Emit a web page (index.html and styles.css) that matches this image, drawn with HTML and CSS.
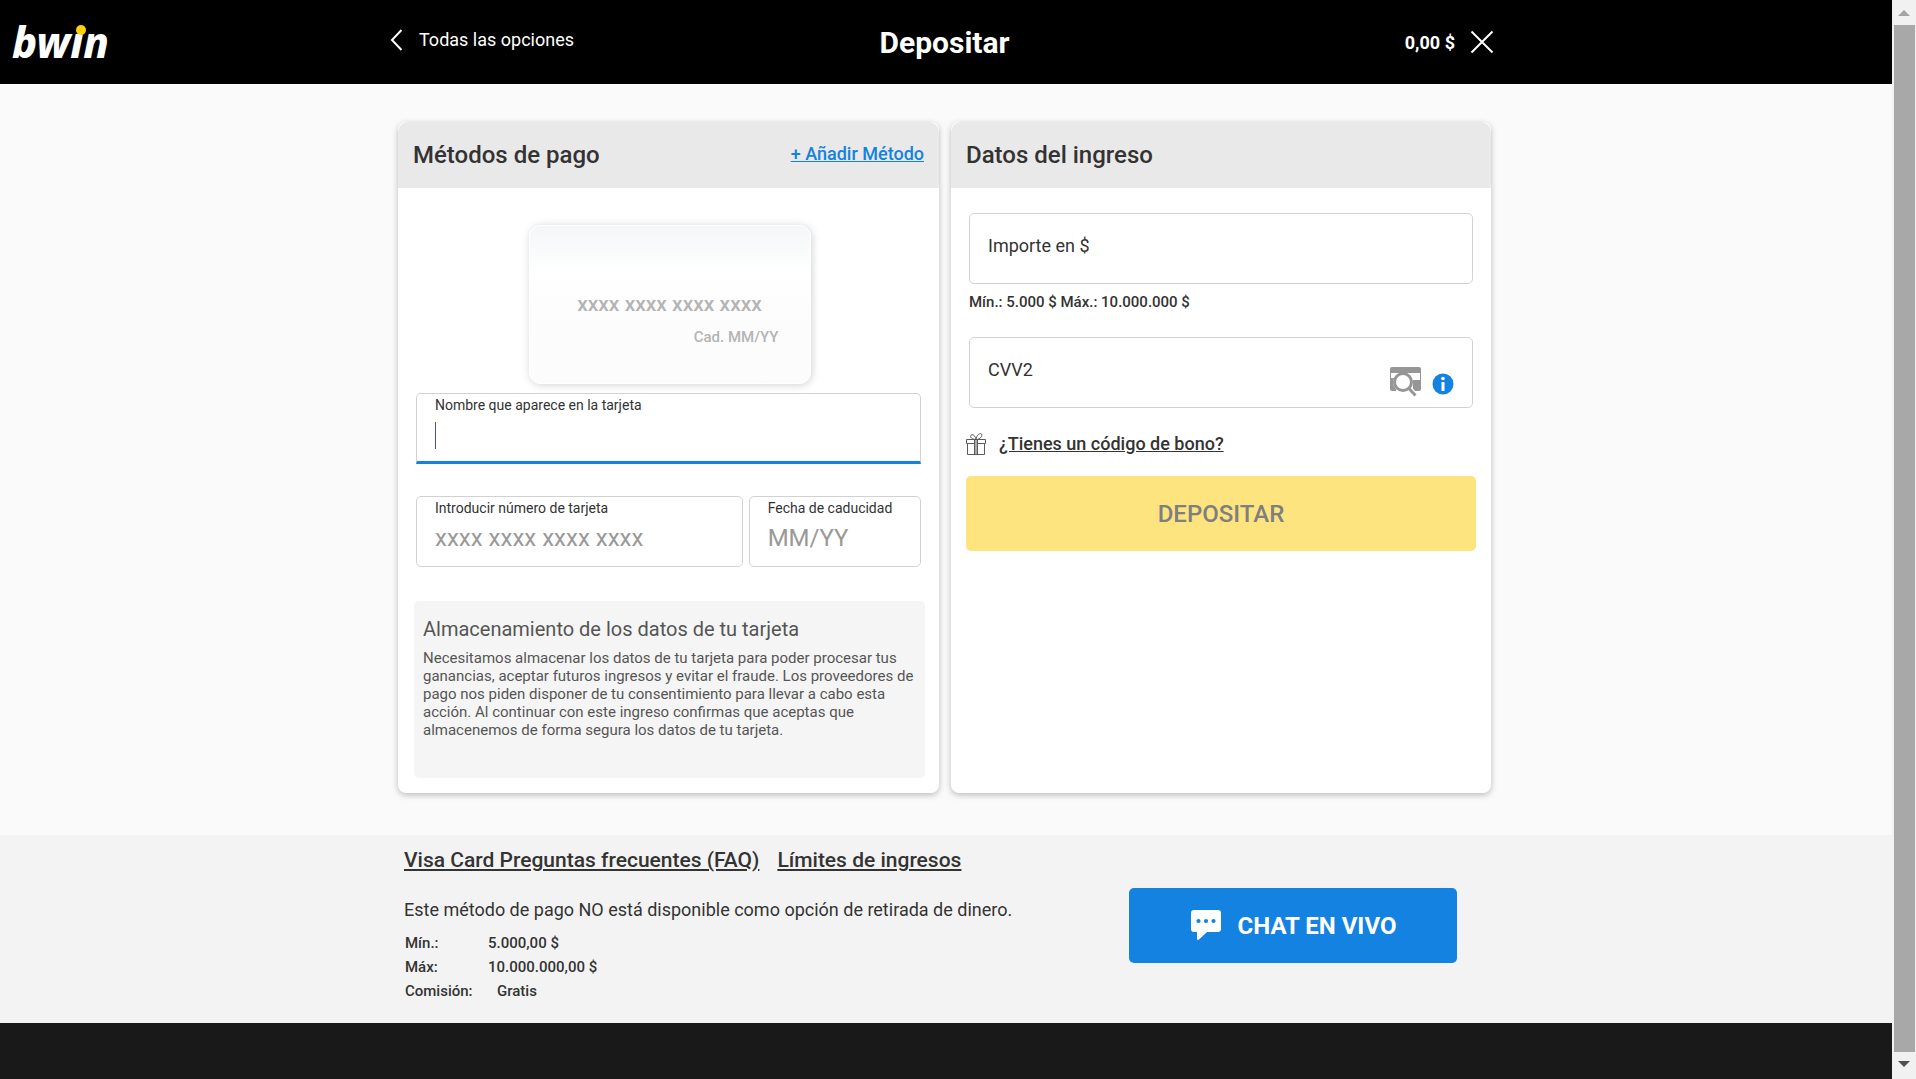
FILE: index.html
```html
<!DOCTYPE html>
<html lang="es">
<head>
<meta charset="utf-8">
<title>Depositar - bwin</title>
<link rel="stylesheet" href="styles.css">
</head>
<body>
<div class="page">
  <header class="topbar">
    <a class="logo" href="#" aria-label="bwin">
      <svg width="98" height="40" viewBox="0 0 98 40">
        <text class="logo-text" x="0" y="36">bwin</text>
        <path d="M60 0h18v12H60z"/>
        <circle class="logo-dot" cx="69" cy="8" r="5"/>
      </svg>
    </a>
    <div class="container topbar-inner">
      <a class="back" href="#">
        <svg width="13" height="22" viewBox="0 0 13 22"><path d="M11.500 1 2 11l9.500 10" fill="none" stroke="#fff" stroke-width="2"/></svg>
        <span>Todas las opciones</span>
      </a>
      <h1 class="title">Depositar</h1>
      <div class="account">
        <span class="balance">0,00 $</span>
        <button class="close" type="button" aria-label="Cerrar">
          <svg width="24" height="24" viewBox="0 0 24 24"><path d="M1.500 1.500l21 21M22.500 1.500l-21 21" fill="none" stroke="#fff" stroke-width="2"/></svg>
        </button>
      </div>
    </div>
  </header>

  <main class="main">
    <form class="container cards">
      <section class="card">
        <div class="card-head">
          <h2>Métodos de pago</h2>
          <a class="add" href="#">+ Añadir Método</a>
        </div>
        <div class="card-body methods">
          <div class="preview">
            <div class="preview-number">xxxx xxxx xxxx xxxx</div>
            <div class="preview-date">Cad. MM/YY</div>
          </div>
          <div class="fields">
            <div class="field focused">
              <label for="name">Nombre que aparece en la tarjeta</label>
              <div class="entry"><span class="caret"></span><input id="name" type="text"></div>
            </div>
            <div class="field-row">
              <div class="field">
                <label for="number">Introducir número de tarjeta</label>
                <div class="entry"><input id="number" type="text" placeholder="xxxx xxxx xxxx xxxx"></div>
              </div>
              <div class="field">
                <label for="expiry">Fecha de caducidad</label>
                <div class="entry"><input id="expiry" type="text" placeholder="MM/YY"></div>
              </div>
            </div>
          </div>
          <div class="notice">
            <h3>Almacenamiento de los datos de tu tarjeta</h3>
            <p>Necesitamos almacenar los datos de tu tarjeta para poder procesar tus ganancias, aceptar futuros ingresos y evitar el fraude. Los proveedores de pago nos piden disponer de tu consentimiento para llevar a cabo esta acción. Al continuar con este ingreso confirmas que aceptas que almacenemos de forma segura los datos de tu tarjeta.</p>
          </div>
        </div>
      </section>

      <section class="card">
        <div class="card-head">
          <h2>Datos del ingreso</h2>
        </div>
        <div class="card-body details">
          <div class="fields">
            <div class="field resting">
              <label for="amount">Importe en $</label>
              <input id="amount" type="text">
            </div>
            <p class="limits-hint">Mín.: 5.000 $ Máx.: 10.000.000 $</p>
            <div class="field resting">
              <label for="cvv">CVV2</label>
              <input id="cvv" type="text">
              <div class="field-icons">
                <svg width="32" height="30" viewBox="0 0 32 30">
                  <path fill="#969696" d="M0 11h6v13H2a2 2 0 0 1-2-2zM23 13h8v9a2 2 0 0 1-2 2h-6z"/>
                  <path d="M.5 3v18M30.500 3v18" stroke="#969696"/>
                  <circle cx="13" cy="15" r="10" fill="#fff"/>
                  <path d="M2 0h27a2 2 0 0 1 2 2v4H0V2a2 2 0 0 1 2-2z" fill="#969696"/>
                  <path d="M19 21l7 8" stroke="#fff" stroke-width="5"/>
                  <circle cx="13" cy="15" r="8.500" fill="#fff" stroke="#969696" stroke-width="3"/>
                  <path d="M18.500 21l7 7.500" stroke="#969696" stroke-width="3"/>
                </svg>
                <button class="info" type="button" aria-label="Información">
                  <svg width="22" height="22" viewBox="0 0 22 22"><circle cx="11" cy="11" r="10.500" fill="#1382e0"/><circle cx="11" cy="5.500" r="1.800" fill="#fff"/><path d="M9.500 9h3v9h-3z" fill="#fff"/></svg>
                </button>
              </div>
            </div>
          </div>
          <a class="bonus" href="#">
            <svg width="20" height="22" viewBox="0 0 20 22" fill="none" stroke="#5a5a5a">
              <path d="M.5 6.500h19v4H.5zM1.500 10.500v11h17v-11M8.500 6.500v15M11.500 6.500v15"/>
              <path d="M10 6.500C6 6.500 3.500 4 5 2.200S9.500 3 10 6.500zM10 6.500c4 0 7-3.500 5.500-5.300S10.500 2 10 6.500z"/>
              <path d="M10 7v14" stroke="#aaa" stroke-width="2"/>
            </svg>
            <span>¿Tienes un código de bono?</span>
          </a>
          <button class="deposit" type="submit" disabled>DEPOSITAR</button>
        </div>
      </section>
    </form>
  </main>

  <section class="help">
    <div class="container help-inner">
      <div class="help-text">
        <nav class="help-links">
          <a href="#">Visa Card Preguntas frecuentes (FAQ)</a>
          <a href="#">Límites de ingresos</a>
        </nav>
        <p>Este método de pago NO está disponible como opción de retirada de dinero.</p>
        <table class="limits">
          <tbody>
            <tr><th scope="row">Mín.:</th><td>5.000,00 $</td></tr>
            <tr><th scope="row">Máx:</th><td>10.000.000,00 $</td></tr>
            <tr><th scope="row">Comisión:</th><td class="free">Gratis</td></tr>
          </tbody>
        </table>
      </div>
      <button class="chat" type="button">
        <svg width="32" height="32" viewBox="0 0 32 32">
          <path fill="#fff" d="M4 0h24a3 3 0 0 1 3 3v16a3 3 0 0 1-3 3H17l-8 7.500c-1 .9-2 .5-2-.7V22H4a3 3 0 0 1-3-3V3a3 3 0 0 1 3-3z"/>
          <g fill="#1382e0"><circle cx="8.500" cy="11" r="2.100"/><circle cx="16" cy="11" r="2.100"/><circle cx="23.500" cy="11" r="2.100"/></g>
        </svg>
        <span>CHAT EN VIVO</span>
      </button>
    </div>
  </section>
  <footer class="bottom"></footer>
</div>
<div class="scrollbar" aria-hidden="true">
  <svg width="12" height="6" viewBox="0 0 12 6"><path d="M6 0l6 6H0z" fill="#a3a3a3"/></svg>
  <div class="thumb"></div>
  <svg width="12" height="6" viewBox="0 0 12 6"><path d="M6 6l6-6H0z" fill="#505050"/></svg>
</div>
</body>
</html>
```
FILE: styles.css
```css
* { box-sizing: border-box; }

body {
  margin: 0;
  display: flex;
  min-height: 100vh;
  font-family: Roboto, "Liberation Sans", sans-serif;
  color: #333;
  background: #fafafa;
}

h1, h2, h3, p { margin: 0; }
svg { display: block; flex: none; }
a { color: inherit; }
button { border: 0; padding: 0; font-family: inherit; cursor: pointer; }
input {
  width: 100%;
  min-width: 0;
  padding: 0;
  border: 0;
  outline: 0;
  background: none;
  font: inherit;
  color: #333;
}

.page {
  flex: 1;
  min-width: 0;
  display: flex;
  flex-direction: column;
}

.container {
  width: 100%;
  max-width: 1112px;
  margin: 0 auto;
}

/* Top bar */
.topbar {
  position: relative;
  height: 84px;
  background: #000;
  color: #fff;
}
.logo { position: absolute; left: 12px; top: 22px; }
.logo svg { overflow: visible; }
.logo-text {
  font: italic 800 42px "Noto Sans", "Open Sans", sans-serif;
  fill: #fff;
}
.logo-dot { fill: #ffd200; }
.topbar-inner {
  height: 100%;
  display: grid;
  grid-template-columns: 1fr auto 1fr;
  align-items: center;
  padding-right: 8px;
}
.back {
  display: flex;
  align-items: center;
  gap: 16px;
  padding-bottom: 5px;
  font-size: 18px;
  text-decoration: none;
}
.title { padding-left: 5px; font-size: 30px; font-weight: 700; }
.account {
  display: flex;
  justify-content: flex-end;
  align-items: center;
  gap: 15px;
}
.balance { font-size: 18px; font-weight: 700; }
.close { background: none; }

/* Cards */
.main { padding: 38px 0 42px; }
.cards {
  display: grid;
  grid-template-columns: 541fr 540fr;
  gap: 12px;
  padding: 0 11px 0 8px;
}
.card {
  min-height: 671px;
  background: #fff;
  border-radius: 8px;
  box-shadow: 0 2px 6px rgba(0, 0, 0, .25);
  overflow: hidden;
}
.card-head {
  height: 66px;
  display: flex;
  justify-content: space-between;
  align-items: center;
  padding: 0 15px;
  border-radius: 10px 10px 0 0;
  background: #e9e9e9;
}
.card-head h2 { font-size: 24px; font-weight: 500; }
.add { padding-bottom: 3px; font-size: 18px; font-weight: 500; color: #1382e0; }

.methods { padding: 37px 14px 15px 16px; }
.preview {
  width: 282px;
  height: 159px;
  margin: 0 auto 9px;
  padding: 66px 31px 0;
  border: 1px solid #fff;
  border-radius: 12px;
  background: linear-gradient(#f5f6f8, #fafcfc 18%, #fff 30%, #fdfdfd 45%, #fcfcfc);
  box-shadow: 1px 1px 8px rgba(0, 0, 0, .18);
  font-weight: 500;
  color: #b4b4b4;
}
.preview-number { font-size: 21px; line-height: 24px; text-align: center; }
.preview-date { margin-top: 9px; font-size: 15px; line-height: 24px; text-align: right; }

.methods .fields { padding: 0 4px 0 2px; }
.field {
  position: relative;
  height: 71px;
  padding: 3px 18px 0;
  border: 1px solid #d2d2d2;
  border-radius: 5px;
  background: #fff;
}
.field label { display: block; font-size: 14px; line-height: 16px; }
.entry { display: flex; align-items: center; height: 44px; font-size: 24px; }
.entry input::placeholder { color: #999; opacity: 1; }
.caret { flex: none; width: 1px; height: 27px; background: #3f51b5; }
.focused { border-bottom: 3px solid #1382e0; border-radius: 5px 5px 0 0; }
.field-row {
  display: grid;
  grid-template-columns: 326fr 172fr;
  gap: 6px;
  margin-top: 32px;
}
.notice {
  min-height: 177px;
  margin-top: 34px;
  padding: 16px 9px;
  border-radius: 5px;
  background: #f5f5f5;
  color: #555;
}
.notice h3 { font-size: 20px; line-height: 24px; font-weight: 400; }
.notice p { margin-top: 8px; font-size: 15px; line-height: 18px; }

.details { padding: 25px 15px; }
.details .fields { padding: 0 3px; }
.field.resting { padding-top: 20px; }
.field.resting label { font-size: 18px; line-height: 24px; }
.resting input { display: block; height: 20px; }
.limits-hint {
  margin: 9px 0 26px;
  font-size: 15px;
  line-height: 18px;
  font-weight: 500;
}
.field-icons {
  position: absolute;
  right: 18px;
  bottom: 10px;
  display: flex;
  align-items: flex-end;
  gap: 10px;
}
.info { padding-bottom: 2px; background: none; }
.bonus {
  display: flex;
  align-items: center;
  gap: 13px;
  margin-top: 24px;
  font-size: 18px;
  line-height: 24px;
  font-weight: 500;
}
.deposit {
  width: 100%;
  height: 75px;
  margin-top: 20px;
  border-radius: 5px;
  background: #fde47f;
  color: #7f7f7f;
  font-size: 24px;
  font-weight: 500;
}

/* Help strip */
.help { background: #f3f3f3; }
.help-inner {
  min-height: 188px;
  display: flex;
  justify-content: space-between;
  align-items: flex-start;
  padding: 0 45px 0 14px;
}
.help-links {
  display: flex;
  gap: 18px;
  padding-top: 13px;
  font-size: 21px;
  line-height: 24px;
  font-weight: 500;
}
.help-text p { margin-top: 26px; font-size: 18px; line-height: 24px; }
.limits { margin-top: 9px; border-spacing: 0; font-size: 15px; line-height: 24px; }
.limits th { width: 84px; padding: 0 0 0 1px; text-align: left; font-weight: 500; }
.limits td { padding: 0; font-weight: 500; }
.limits .free { padding-left: 9px; }
.chat {
  width: 328px;
  height: 75px;
  margin-top: 53px;
  display: flex;
  justify-content: center;
  align-items: center;
  gap: 16px;
  border-radius: 5px;
  background: #1382e0;
  color: #fff;
  font-size: 24px;
  font-weight: 700;
}
.bottom { flex: 1; min-height: 56px; background: #191919; }

/* Scroll track */
.scrollbar {
  position: sticky;
  top: 0;
  width: 24px;
  height: 100vh;
  display: flex;
  flex-direction: column;
  align-items: center;
  gap: 9px;
  padding: 10px 0 12px;
  background: #f1f1f1;
}
.thumb { flex: 1; width: 21px; background: #a8a8a8; }
```
